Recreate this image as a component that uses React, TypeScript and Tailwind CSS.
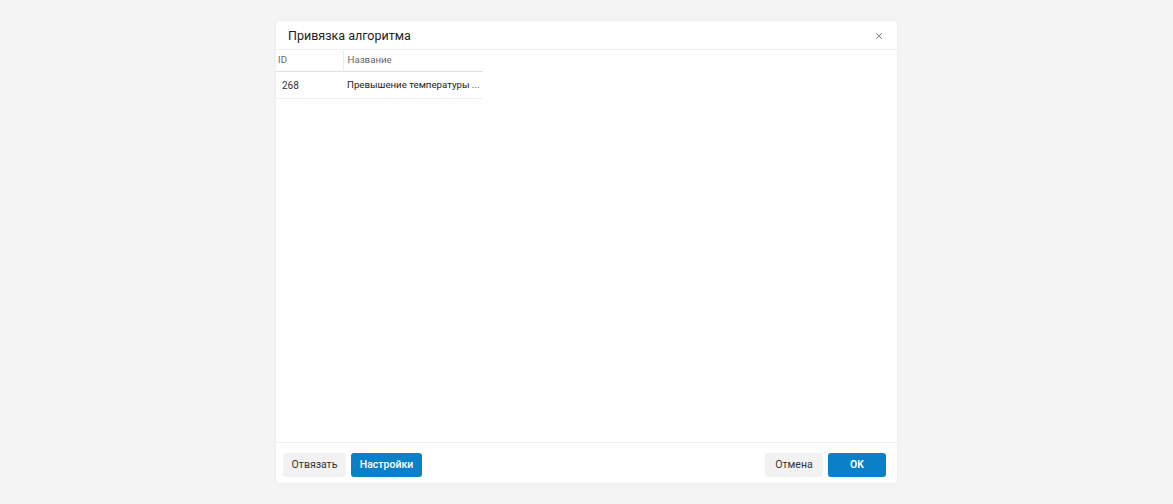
import { X } from "lucide-react";

// ─── Types ────────────────────────────────────────────────────────────────────

interface AlgorithmRow {
  id: number;
  name: string;
}

// ─── Constants ────────────────────────────────────────────────────────────────

const ROWS: AlgorithmRow[] = [{ id: 268, name: "Превышение температуры ..." }];

// ─── Main App ─────────────────────────────────────────────────────────────────

export default function App() {
  return (
    <div
      className="h-[504px] w-full bg-[#f4f4f4] flex items-center justify-center"
      style={{ fontFamily: "Roboto, 'Noto Sans', sans-serif" }}
    >
      <div className="w-[621px] h-[462px] bg-white rounded-[3px] shadow-[0_0_3px_rgba(0,0,0,0.06)] flex flex-col">
        {/* Header */}
        <div className="h-[29px] flex items-center justify-between pl-3 pr-[13px] border-b border-[#f0f0f0]">
          <span className="text-[12.5px] text-[#222] leading-none pt-[3px]">
            Привязка алгоритма
          </span>
          <X className="w-[10px] h-[10px] text-[#8a8a8a] mt-[1px]" strokeWidth={2.5} />
        </div>

        {/* Table */}
        <div className="flex-1">
          <table className="w-[207px] table-fixed border-collapse text-[9.7px]">
            <thead>
              <tr className="h-[21px] border-b border-[#e0e0e0]">
                <th className="w-[67px] text-left font-normal text-[#666] pl-[2px] pt-[1px] border-r border-[#ececec]">
                  ID
                </th>
                <th className="text-left font-normal text-[#666] pl-[4px] pt-[1px]">
                  Название
                </th>
              </tr>
            </thead>
            <tbody>
              {ROWS.map((row) => (
                <tr key={row.id} className="h-[27px] border-b border-[#f0f0f0]">
                  <td className="pl-[6px] pt-[1px] text-[#333] text-[10px]">{row.id}</td>
                  <td className="pl-[4px] pt-[1px] text-[#222] whitespace-nowrap overflow-hidden">
                    {row.name}
                  </td>
                </tr>
              ))}
            </tbody>
          </table>
        </div>

        {/* Footer */}
        <div className="h-[41px] border-t border-[#f0f0f0] flex items-start justify-between pt-[10px] pl-[7px] pr-[11px]">
          <div className="flex gap-[5px]">
            <button
              type="button"
              className="h-[24px] w-[63px] rounded-[3px] bg-[#f2f2f2] text-[10.5px] text-[#333]"
            >
              Отвязать
            </button>
            <button
              type="button"
              className="h-[24px] w-[71px] rounded-[3px] bg-[#0a80c6] text-[10.5px] font-medium text-white"
            >
              Настройки
            </button>
          </div>
          <div className="flex gap-[5px]">
            <button
              type="button"
              className="h-[24px] w-[58px] rounded-[3px] bg-[#f2f2f2] text-[10.5px] text-[#333]"
            >
              Отмена
            </button>
            <button
              type="button"
              className="h-[24px] w-[58px] rounded-[3px] bg-[#0a80c6] text-[10.5px] font-semibold text-white"
            >
              OK
            </button>
          </div>
        </div>
      </div>
    </div>
  );
}
